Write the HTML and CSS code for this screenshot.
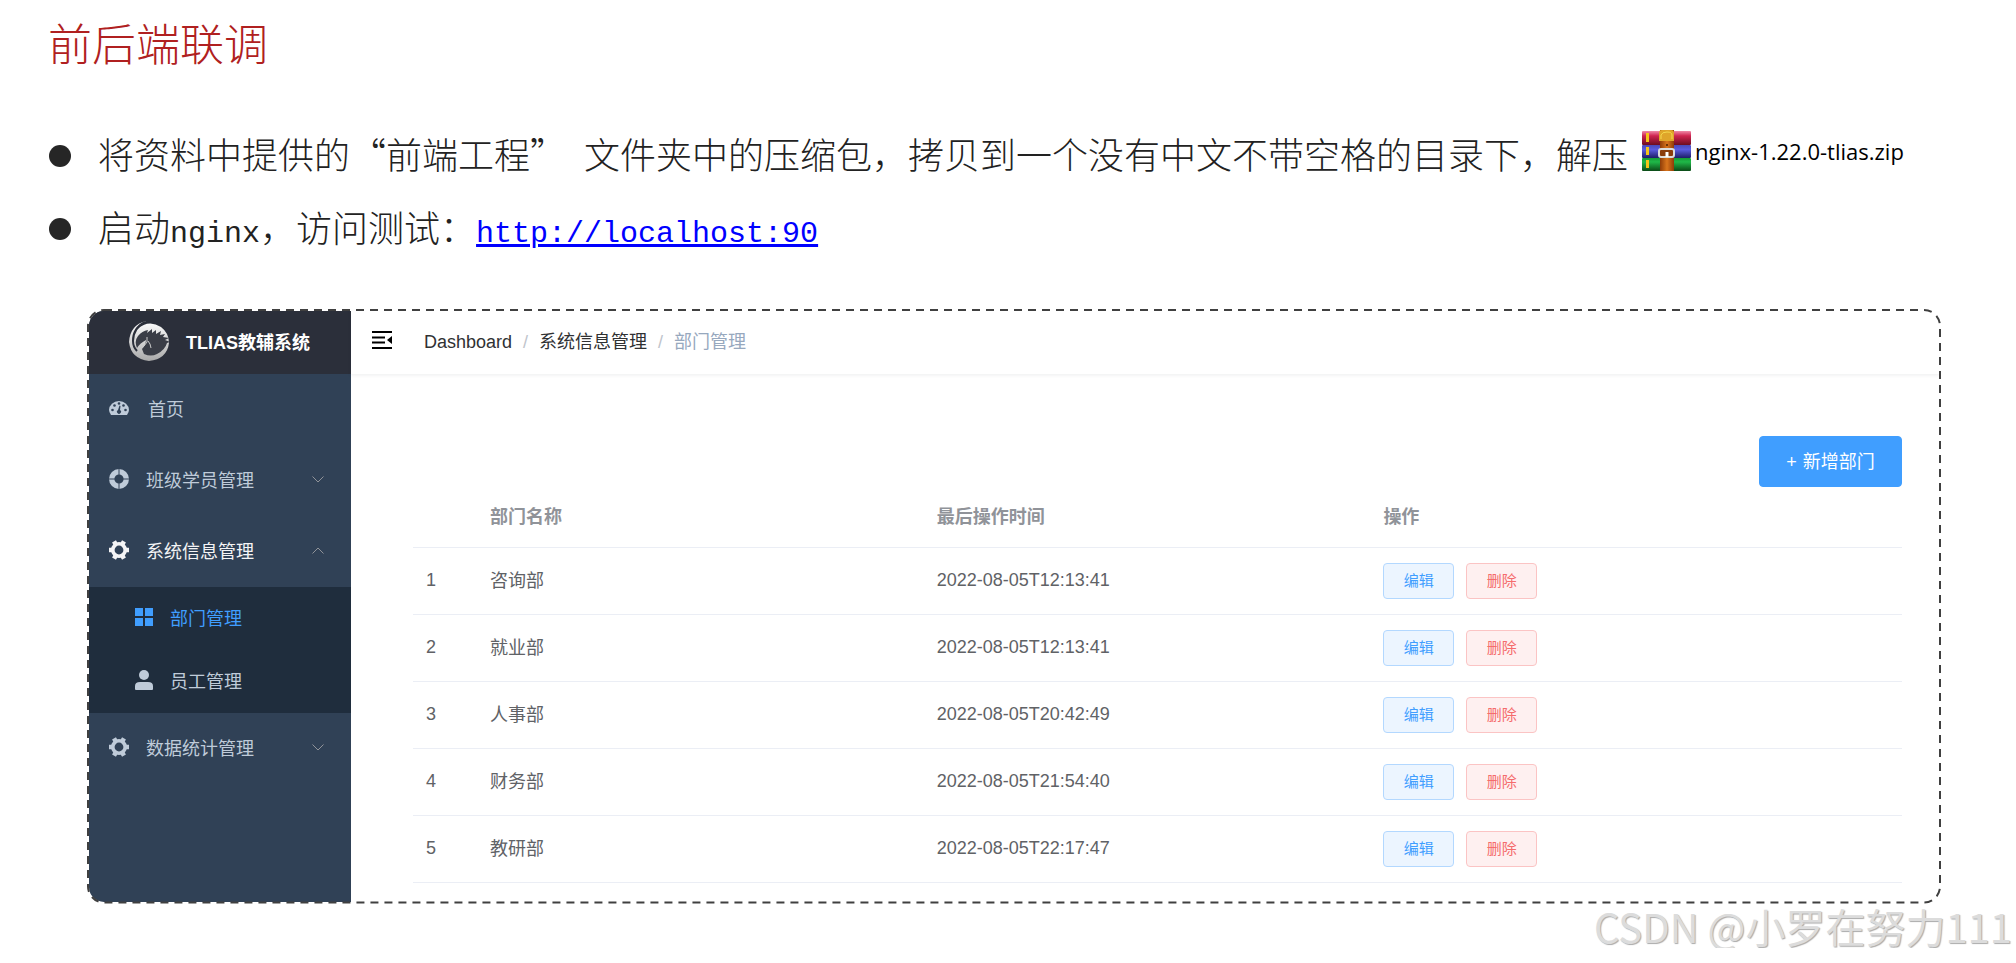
FILE: index.html
```html
<!DOCTYPE html>
<html lang="zh-CN">
<head>
    <meta charset="UTF-8">
    <title>前后端联调</title>
    <link rel="stylesheet" href="styles.css">
</head>
<body>
    <h1>前后端联调</h1>

    <ul class="steps">
        <li>
            <span class="text">将资料中提供的“前端工程”<span class="latin">&nbsp;</span>文件夹中的压缩包，拷贝到一个没有中文不带空格的目录下，解压</span>
            <span class="file">
                <svg width="49" height="42" viewBox="0 0 49 42">
                    <defs>
                        <linearGradient id="red" x1="0" y1="0" x2="0" y2="1"><stop offset="0" stop-color="#f08aa8"/><stop offset="0.35" stop-color="#cf2450"/><stop offset="1" stop-color="#6d0d20"/></linearGradient>
                        <linearGradient id="blue" x1="0" y1="0" x2="0" y2="1"><stop offset="0" stop-color="#4a4ab8"/><stop offset="0.35" stop-color="#5a5be0"/><stop offset="1" stop-color="#1d1d66"/></linearGradient>
                        <linearGradient id="green" x1="0" y1="0" x2="0" y2="1"><stop offset="0" stop-color="#159a35"/><stop offset="0.3" stop-color="#1fb848"/><stop offset="1" stop-color="#0b4a17"/></linearGradient>
                        <linearGradient id="belt" x1="0" y1="0" x2="1" y2="0"><stop offset="0" stop-color="#8f3c08"/><stop offset="0.5" stop-color="#d9751c"/><stop offset="1" stop-color="#8f3c08"/></linearGradient>
                    </defs>
                    <rect x="0" y="1" width="49" height="14" rx="1" fill="url(#red)"/>
                    <rect x="0" y="15" width="49" height="13" rx="1" fill="url(#blue)"/>
                    <rect x="0" y="28" width="49" height="13" rx="1" fill="url(#green)"/>
                    <path d="M4 3h3v9H4zM4 17h3v8H4zM4 30h3v8H4z" fill="#f5c518"/>
                    <rect x="18" y="0" width="14" height="41" fill="url(#belt)"/>
                    <path d="M17 11V3q0-3 3-3h9q3 0 3 3v8z" fill="#dfa52a"/>
                    <path d="M19 9V5q1-3 6-3t5 3v4" fill="none" stroke="#f4d84e"/>
                    <circle cx="25" cy="15" r="1" fill="#4a2000"/>
                    <rect x="17" y="19" width="15" height="8" rx="2" fill="#8a3c0c" stroke="#dcdcdc" stroke-width="2"/>
                    <path d="M25 22v5" stroke="#fff" stroke-width="3"/>
                </svg>
                nginx-1.22.0-tlias.zip
            </span>
        </li>
        <li>
            <span class="text">启动<span class="latin">nginx</span>，访问测试：<a class="latin" href="http://localhost:90">http://localhost:90</a></span>
        </li>
    </ul>

    <div class="frame">
        <div class="app">
            <aside class="sidebar">
                <div class="logo">
                    <svg width="40" height="40" viewBox="0 0 40 40">
                        <defs>
                            <linearGradient id="silver" x1="0" y1="0" x2="0" y2="1"><stop offset="0" stop-color="#ffffff"/><stop offset="1" stop-color="#a9a9a9"/></linearGradient>
                        </defs>
                        <path d="M17 0Q10 4 8 8Q20-2 32 6Q40 12 40 22Q38 38 20 40Q2 38 0 21Q1 4 17 0Z" fill="url(#silver)"/>
                        <path d="M16 1Q4 7 4 20Q4 26 8 30" fill="none" stroke="#2b2f3a" stroke-width="2"/>
                        <path d="M8 27Q5 20 9 15Q13 10 19 9l-1 3 5-4v4l4-3v4l5-3-1 4 5-1-2 3 6 1-4 2 5 2-3 1Q36 29 28 33Q22 36 15 33L13 28Q17 24 17 19Q11 22 8 27Z" fill="#3a3d46"/>
                        <path d="M18 16v5l-3 4-4 3M19 20l2 3 1 4" fill="none" stroke="#c9c9c9"/>
                    </svg>
                    <span>TLIAS教辅系统</span>
                </div>
                <nav class="menu">
                    <a href="#" class="item home">
                        <svg class="icon" width="20" height="20" viewBox="0 0 20 20"><path d="M2 17Q0 14 0 12A10 9 0 0 1 20 12Q20 14 18 17Z" fill="currentColor"/><g fill="#304156"><circle cx="3.500" cy="12" r="1.300"/><circle cx="5.500" cy="7.500" r="1.300"/><circle cx="10" cy="5.500" r="1.300"/><circle cx="14.500" cy="7.500" r="1.300"/><circle cx="16.500" cy="12" r="1.300"/><path d="M10.500 7.500L9 12a2 2 0 1 0 2 0l0.500-4z"/></g></svg>
                        首页
                    </a>
                    <a href="#" class="item">
                        <svg class="icon" width="20" height="20" viewBox="0 0 20 20"><circle cx="10" cy="10" r="7.300" fill="none" stroke="currentColor" stroke-width="5.400"/><path d="M10 0v6M10 14v6M0 10h6M14 10h6" stroke="#304156"/></svg>
                        班级学员管理
                        <svg class="arrow" width="12" height="7" viewBox="0 0 12 7"><path d="M0.500 0.500L6 6l5.500-5.500"/></svg>
                    </a>
                    <a href="#" class="item open">
                        <svg class="icon" width="20" height="20" viewBox="0 0 20 20"><use href="#gear"/></svg>
                        系统信息管理
                        <svg class="arrow" width="12" height="7" viewBox="0 0 12 7"><path d="M0.500 6.500L6 1l5.500 5.500"/></svg>
                    </a>
                    <div class="submenu">
                        <a href="#" class="item active">
                            <svg class="icon" width="18" height="18" viewBox="0 0 18 18"><path d="M0 0h8v8H0zM10 0h8v8h-8zM0 10h8v8H0zM10 10h8v8h-8z" fill="currentColor"/></svg>
                            部门管理
                        </a>
                        <a href="#" class="item">
                            <svg class="icon" width="18" height="20" viewBox="0 0 18 20"><circle cx="9" cy="5" r="5" fill="currentColor"/><path d="M0 19v-3q0-4 5-4h8q5 0 5 4v3q0 1-1 1H1q-1 0-1-1z" fill="currentColor"/></svg>
                            员工管理
                        </a>
                    </div>
                    <a href="#" class="item">
                        <svg class="icon" width="20" height="20" viewBox="0 0 20 20"><g id="gear"><circle cx="10" cy="10" r="6.200" fill="none" stroke="currentColor" stroke-width="3.600"/><path d="M0 10h3M17 10h3M5 1.300l1.500 2.600M13.500 16.100l1.500 2.600M5 18.700l1.500-2.600M13.500 3.900L15 1.300" stroke="currentColor" stroke-width="4.500"/></g></svg>
                        数据统计管理
                        <svg class="arrow" width="12" height="7" viewBox="0 0 12 7"><path d="M0.500 0.500L6 6l5.500-5.500"/></svg>
                    </a>
                </nav>
            </aside>

            <main>
                <header>
                    <button class="fold" aria-label="收起菜单">
                        <svg width="20" height="18" viewBox="0 0 20 18"><path d="M0 1h20M0 6.500h13M0 11.500h13M0 17h20" stroke="#000" stroke-width="2"/><path d="M20 5v8l-5-4z"/></svg>
                    </button>
                    <nav class="breadcrumb">
                        <a href="#">Dashboard</a><i>/</i><a href="#">系统信息管理</a><i>/</i><span>部门管理</span>
                    </nav>
                </header>
                <section class="content">
                    <button class="add"><span class="plus">+</span>新增部门</button>
                    <table>
                        <thead>
                            <tr><th class="num"></th><th class="wide">部门名称</th><th class="wide">最后操作时间</th><th>操作</th></tr>
                        </thead>
                        <tbody>
                            <tr><td>1</td><td class="name">咨询部</td><td>2022-08-05T12:13:41</td><td><button class="edit">编辑</button><button class="delete">删除</button></td></tr>
                            <tr><td>2</td><td class="name">就业部</td><td>2022-08-05T12:13:41</td><td><button class="edit">编辑</button><button class="delete">删除</button></td></tr>
                            <tr><td>3</td><td class="name">人事部</td><td>2022-08-05T20:42:49</td><td><button class="edit">编辑</button><button class="delete">删除</button></td></tr>
                            <tr><td>4</td><td class="name">财务部</td><td>2022-08-05T21:54:40</td><td><button class="edit">编辑</button><button class="delete">删除</button></td></tr>
                            <tr><td>5</td><td class="name">教研部</td><td>2022-08-05T22:17:47</td><td><button class="edit">编辑</button><button class="delete">删除</button></td></tr>
                        </tbody>
                    </table>
                </section>
            </main>
        </div>
        <!-- dashed outline -->
        <svg class="outline"><rect x="1" y="1" rx="16"/></svg>
    </div>

    <footer>CSDN @小罗在努力111</footer>
</body>
</html>
```
FILE: styles.css
```css
* {
    box-sizing: border-box;
}

body {
    margin: 0;
    background-color: #fff;
    font-family: "Liberation Sans", "Noto Sans CJK SC", sans-serif;
    font-size: 18px;
}

a {
    text-decoration: none;
}

button {
    font-family: inherit;
    cursor: pointer;
}

h1 {
    margin: 0 0 35px;
    padding-left: 48px;
    color: #b02020;
    font-family: "Noto Sans CJK SC", sans-serif;
    font-size: 44px;
    font-weight: 300;
    line-height: 84px;
}

.steps {
    list-style: none;
    margin: 0 0 44px;
    padding: 0 0 0 49px;
    color: #222;
    font-family: "Noto Sans CJK SC", sans-serif;
    font-size: 36px;
    font-weight: 300;
}

.steps li {
    display: flex;
    align-items: center;
    height: 73px;
    white-space: nowrap;
}

.steps li::before {
    content: "";
    width: 22px;
    height: 22px;
    margin-right: 27px;
    border-radius: 50%;
    background-color: #262626;
}

.text {
    padding-top: 4px;
    line-height: 69px;
}

.latin {
    font-family: "Liberation Mono", monospace;
    font-size: 30px;
}

.steps a {
    color: #0000ff;
    text-decoration: underline;
}

.file {
    display: flex;
    align-items: center;
    gap: 4px;
    height: 64px;
    margin-left: 14px;
    align-self: flex-start;
    color: #000;
    font-family: "Open Sans", sans-serif;
    font-size: 22px;
    font-weight: 400;
}

/* app window */
.frame {
    position: relative;
    margin: 0 75px 0 87px;
    padding: 2px;
}

.outline {
    position: absolute;
    top: 0;
    left: 0;
    width: 100%;
    height: 100%;
    pointer-events: none;
}

.outline rect {
    width: calc(100% - 2px);
    height: calc(100% - 2px);
    fill: none;
    stroke: #404040;
    stroke-width: 2px;
    stroke-dasharray: 8 6;
}

.app {
    display: flex;
    border-radius: 15px;
    overflow: hidden;
}

.sidebar {
    width: 262px;
    background-color: #304156;
}

.logo {
    display: flex;
    align-items: center;
    gap: 17px;
    height: 63px;
    padding: 0 0 4px 40px;
    background-color: #2b2f3a;
    color: #fff;
    font-weight: bold;
}

.item {
    display: flex;
    align-items: center;
    height: 71px;
    padding: 0 27px 3px 20px;
    color: #bfcbd9;
}

.icon {
    margin-right: 17px;
}

.home .icon {
    margin-right: 19px;
}

.arrow {
    margin-left: auto;
    fill: none;
    stroke: #909399;
}

.open {
    color: #f4f4f5;
}

.submenu {
    background-color: #1f2d3d;
}

.submenu .item {
    height: 63px;
    padding-left: 46px;
}

.submenu .active {
    color: #409eff;
}

main {
    flex: 1;
}

header {
    display: flex;
    align-items: center;
    height: 63px;
    padding: 0 0 5px 21px;
    box-shadow: 0 1px 4px rgba(0, 21, 41, 0.08);
}

.fold {
    display: flex;
    margin-right: 32px;
    padding: 0;
    border: none;
    background: none;
}

.breadcrumb a {
    color: #303133;
}

.breadcrumb span {
    color: #97a8be;
}

.breadcrumb i {
    margin: 0 11px;
    color: #c0c4cc;
    font-style: normal;
}

.content {
    padding: 62px 37px 19px 62px;
}

.add {
    display: block;
    width: 143px;
    height: 51px;
    margin-left: auto;
    padding: 0 0 3px;
    border: 1px solid #409eff;
    border-radius: 4px;
    background-color: #409eff;
    color: #fff;
    font-size: 18px;
}

.plus {
    margin-right: 6px;
}

table {
    width: 100%;
    border-collapse: collapse;
    table-layout: fixed;
    color: #606266;
}

th,
td {
    height: 67px;
    padding: 0 13px;
    border-bottom: 1px solid #ebeef5;
    text-align: left;
}

th {
    height: 60px;
    padding-bottom: 4px;
    color: #909399;
}

.num {
    width: 64px;
}

.wide {
    width: 30%;
}

.name {
    padding-bottom: 4px;
}

td button {
    width: 71px;
    height: 36px;
    margin-right: 12px;
    padding: 0 0 2px;
    border: 1px solid #b3d8ff;
    border-radius: 4px;
    background-color: #ecf5ff;
    color: #409eff;
    font-size: 15px;
    vertical-align: middle;
}

td .delete {
    border-color: #fbc4c4;
    background-color: #fef0f0;
    color: #f56c6c;
}

footer {
    padding-right: 4px;
    color: #dcdcdc;
    font-family: "Noto Sans CJK SC", sans-serif;
    font-size: 40px;
    line-height: 44px;
    text-align: right;
    text-shadow: 1px 1px 1px #aaa;
}
```
